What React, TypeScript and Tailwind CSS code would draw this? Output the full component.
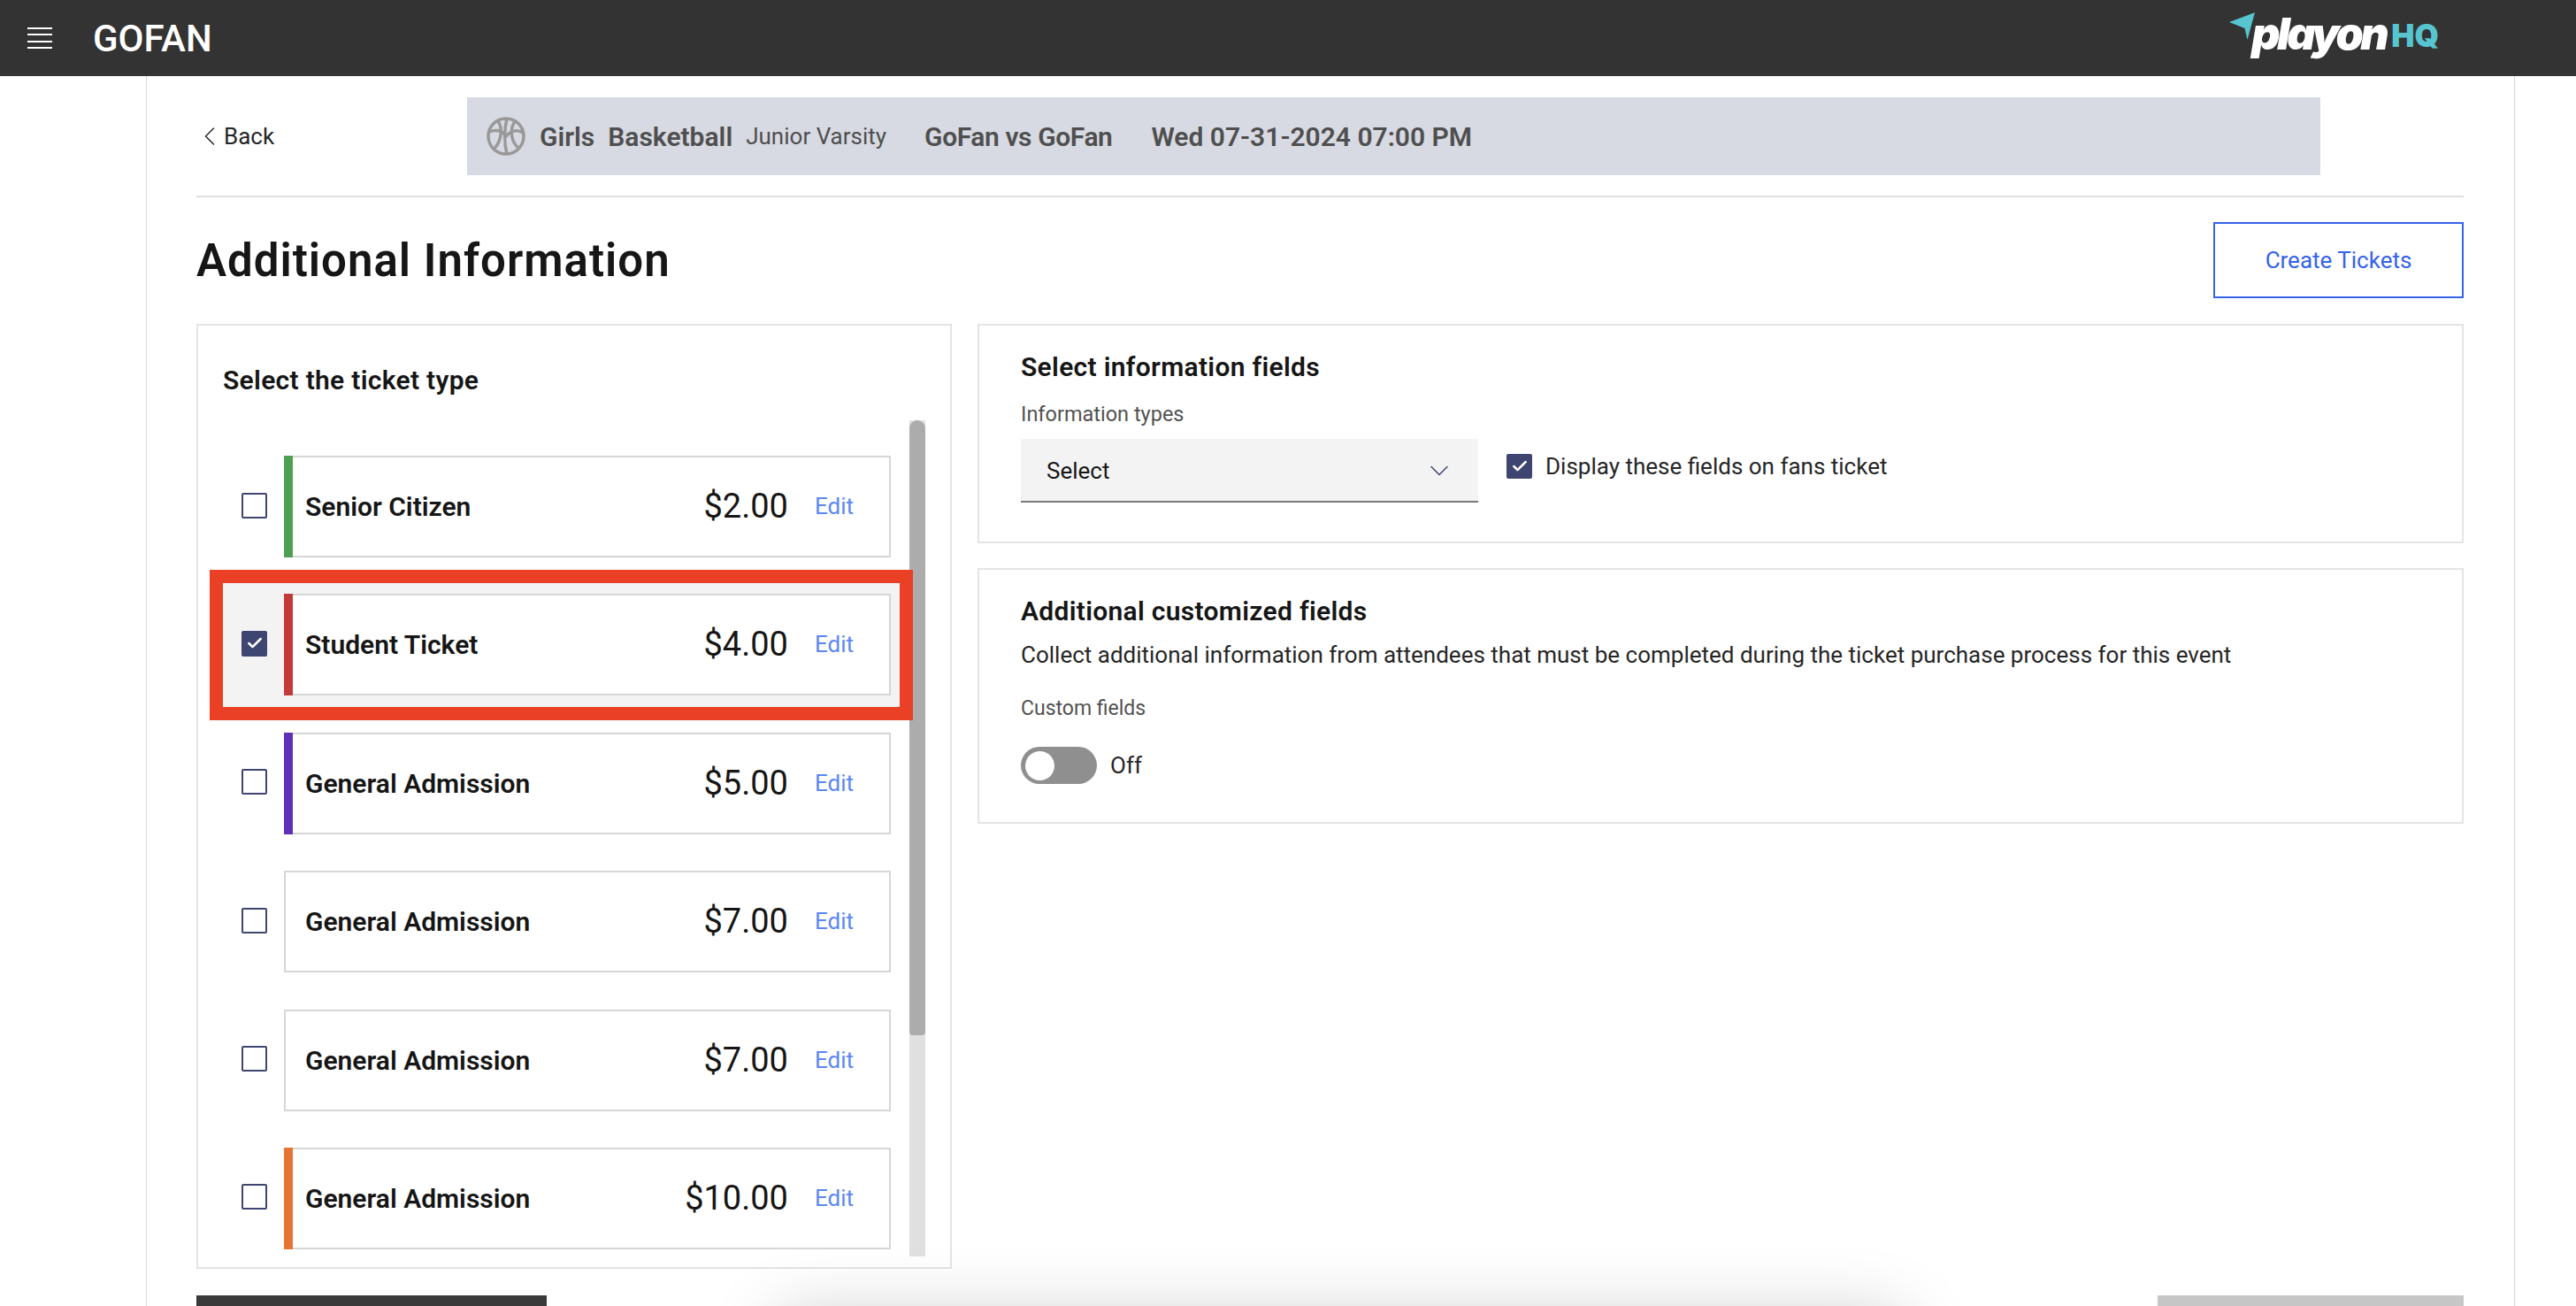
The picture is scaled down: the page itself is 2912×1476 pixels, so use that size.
import React from 'react';
import { ChevronDown, ChevronLeft, Check } from 'lucide-react';

const font = { fontFamily: 'Roboto, "Liberation Sans", sans-serif' };

const tickets = [
  { name: 'Senior Citizen', price: '$2.00', bar: 'bg-[#4f9f52]' },
  { name: 'Student Ticket', price: '$4.00', bar: 'bg-[#c43a3a]', selected: true },
  { name: 'General Admission', price: '$5.00', bar: 'bg-[#5f2fb5]' },
  { name: 'General Admission', price: '$7.00', bar: '' },
  { name: 'General Admission', price: '$7.00', bar: '' },
  { name: 'General Admission', price: '$10.00', bar: 'bg-[#e57435]' },
];

const Basketball = () => (
  <svg viewBox="0 0 44 44" className="h-[44px] w-[44px] shrink-0" fill="none" stroke="#999999" strokeWidth="3.5">
    <circle cx="22" cy="22" r="20" />
    <path d="M23 2C20 14 20 30 23 42M3 17C10 14 18 15 22 22C28 15 36 14 41 18M13 5C18 12 18 25 9 36M32 5C26 14 27 28 37 36" />
  </svg>
);

const TicketRow = ({ t }: { t: (typeof tickets)[number] }) => (
  <div className={`relative mb-[16.4px] flex h-[140px] items-center pl-[21px] pr-[10px] ${t.selected ? 'bg-[#f3f3f3]' : ''}`}>
    {t.selected ? (
      <span className="mb-[3px] flex h-[29px] w-[29px] items-center justify-center rounded-[2px] bg-[#3d4570]">
        <Check className="h-[20px] w-[20px] text-white" strokeWidth={3} />
      </span>
    ) : (
      <span className="mb-[3px] h-[29px] w-[29px] rounded-[2px] border-2 border-[#3d4570] bg-white" />
    )}
    <div className="ml-[19px] flex h-[115px] flex-1 items-center border-2 border-[#d6d6d6] bg-white">
      <div className={`-my-[2px] -ml-[2px] h-[115px] w-[10px] ${t.bar}`} />
      <span className="ml-[14px] text-[30px] font-semibold text-[#161616]">{t.name}</span>
      <span className="ml-auto text-[38px] text-[#161616]">{t.price}</span>
      <span className="ml-[30px] mr-[40px] text-[26px] text-[#5b87f5]">Edit</span>
    </div>
    {t.selected && <div className="pointer-events-none absolute -inset-[15px] z-10 border-[15px] border-[#ea4025]" />}
  </div>
);

export default function App() {
  return (
    <div style={font} className="relative h-[1476px] w-[2912px] overflow-hidden bg-white text-[#161616]">
      {/* top bar */}
      <header className="flex h-[86px] items-center bg-[#333333] pl-[31px] pr-[155px] text-white">
        <div className="flex h-[24px] w-[28px] flex-col justify-between">
          <span className="h-[2px] bg-white" />
          <span className="h-[2px] bg-white" />
          <span className="h-[2px] bg-white" />
          <span className="h-[2px] bg-white" />
        </div>
        <span className="ml-[46px] text-[42px] font-medium">GOFAN</span>
        <div className="ml-auto flex items-center" style={{ fontFamily: 'Inter, sans-serif' }}>
          <svg viewBox="0 0 29 31" className="-mr-[4px] mb-[27px] h-[31px] w-[29px]">
            <path d="M0 11 29 0 20.5 31 17.5 18Z" fill="#56c5d0" />
          </svg>
          <span className="mb-[10px] text-[50px] font-black italic leading-none tracking-[-3.5px] text-white">playon</span>
          <span className="mb-[5px] ml-[6px] text-[35px] font-black leading-none text-[#56c5d0]">HQ</span>
        </div>
      </header>

      <main className="ml-[165px] h-[1390px] w-[2678px] border-x border-[#d8d8d8] pl-[56px] pr-[57px]">
        {/* event summary */}
        <div className="flex items-center pt-[24px]">
          <div className="flex w-[306px] items-center text-[26px] text-[#262626]">
            <ChevronLeft className="-ml-[3px] h-[36px] w-[36px]" strokeWidth={1} />
            <span className="-ml-[2px]">Back</span>
          </div>
          <div className="flex h-[88px] w-[2095px] items-center bg-[#d7dae2] pl-[22px] text-[30px] text-[#4f4f4f]">
            <Basketball />
            <span className="ml-[16px] font-semibold">Girls</span>
            <span className="ml-[15px] font-semibold">Basketball</span>
            <span className="ml-[15px] text-[26px]">Junior Varsity</span>
            <span className="ml-[43px] font-semibold tracking-[-0.4px]">GoFan vs GoFan</span>
            <span className="ml-[44px] font-semibold">Wed 07-31-2024 07:00 PM</span>
          </div>
        </div>
        <div className="mt-[23px] border-t-2 border-[#e0e0e0]" />

        <div className="mt-[28px] flex items-center justify-between">
          <h1 className="pt-[3px] text-[51px] font-semibold tracking-[1px]">Additional Information</h1>
          <button className="h-[86px] w-[283px] border-2 border-[#3563e9] text-[26px] text-[#3563e9]">Create Tickets</button>
        </div>

        <div className="mt-[29px] flex gap-[29px]">
          {/* ticket types */}
          <section className="h-[1068px] w-[854px] border-2 border-[#e4e4e4] pl-[28px]">
            <h2 className="pt-[44px] text-[30px] font-semibold leading-[36px] tracking-[0.3px]">Select the ticket type</h2>
            <div className="mt-[27px] flex h-[945px] gap-[11px]">
              <div className="w-[765px]">
                <div className="pt-[27.5px]">
                  {tickets.map((t, i) => (
                    <TicketRow key={i} t={t} />
                  ))}
                </div>
              </div>
              <div className="h-[945px] w-[18px] bg-[#e0e0e0]">
                <div className="h-[695px] rounded-t-[9px] rounded-b-[4px] bg-[#acacac]" />
              </div>
            </div>
          </section>

          <div className="flex flex-1 flex-col gap-[28px]">
            <section className="h-[248px] border-2 border-[#e4e4e4] pl-[47px] pt-[29px]">
              <h2 className="text-[30px] font-semibold leading-[36px] tracking-[0.3px]">Select information fields</h2>
              <p className="mt-[21px] text-[23.5px] leading-[28px] text-[#525252]">Information types</p>
              <div className="mt-[14px] flex">
                <div className="flex h-[72px] w-[517px] items-center justify-between border-b-2 border-[#7a7a7a] bg-[#f3f3f3] pl-[29px] pr-[26px] pt-[2px] text-[26px]">
                  Select
                  <ChevronDown className="h-[36px] w-[36px] text-[#3d4570]" strokeWidth={1} />
                </div>
                <div className="ml-[32px] mt-[17px] flex h-[28px] items-center">
                  <span className="flex h-[28px] w-[29px] items-center justify-center rounded-[2px] bg-[#3d4570]">
                    <Check className="h-[20px] w-[20px] text-white" strokeWidth={3} />
                  </span>
                  <span className="ml-[15px] text-[26px] text-[#262626]">Display these fields on fans ticket</span>
                </div>
              </div>
            </section>
            <section className="h-[289px] border-2 border-[#e4e4e4] pl-[47px] pt-[29px]">
              <h2 className="text-[30px] font-semibold leading-[36px] tracking-[0.3px]">Additional customized fields</h2>
              <p className="mt-[14px] text-[26px] leading-[34px] text-[#262626]">
                Collect additional information from attendees that must be completed during the ticket purchase process for this event
              </p>
              <p className="mt-[30px] text-[23px] leading-[28px] text-[#525252]">Custom fields</p>
              <div className="mt-[29px] flex items-center">
                <span className="flex h-[42px] w-[86px] items-center rounded-full bg-[#8f8f8f] pl-[5px]">
                  <span className="h-[33px] w-[33px] rounded-full bg-white" />
                </span>
                <span className="ml-[15px] text-[26px] text-[#262626]">Off</span>
              </div>
            </section>
          </div>
        </div>

        {/* footer buttons, cut off by the window */}
        <div className="mt-[30px] flex justify-between">
          <div className="h-[40px] w-[396px] bg-[#3a3a3a]" />
          <div className="h-[40px] w-[346px] bg-[#c6c6c6]" />
        </div>
      </main>

      {/* shadow of the floating panel below the fold */}
      <div className="pointer-events-none absolute left-[900px] top-[1510px] h-[100px] w-[1230px] bg-white shadow-[0_0_80px_20px_rgba(0,0,0,0.22)]" />
    </div>
  );
}
